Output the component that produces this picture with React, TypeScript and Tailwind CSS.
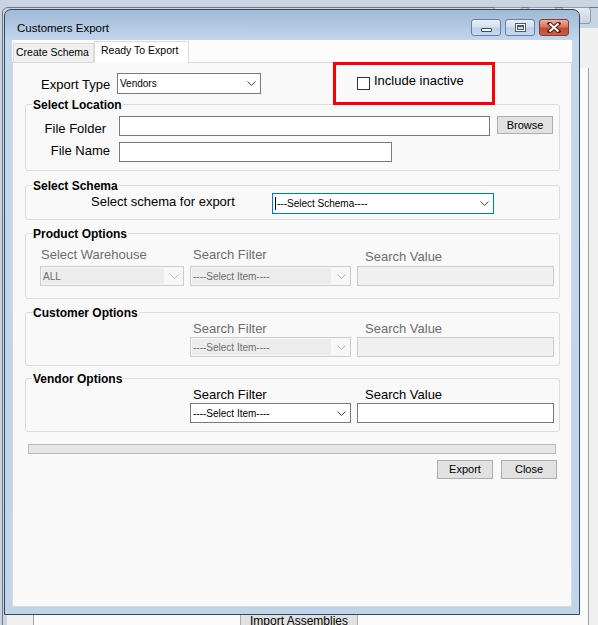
import React from "react";

const Chevron = ({ color }: { color: string }) => (
  <svg width="9" height="5" viewBox="0 0 9 5" className="block">
    <path d="M0.5 0.5 L4.5 4.5 L8.5 0.5" fill="none" stroke={color} strokeWidth="1" />
  </svg>
);

type SelProps = { text: string; cls: string; disabled?: boolean; focused?: boolean; caret?: boolean };

function Select({ text, cls, disabled, focused, caret }: SelProps) {
  const border = focused ? "border-[#0078d7]" : disabled ? "border-[#cccccc]" : "border-[#7a7a7a]";
  return (
    <div className={`${cls} flex items-stretch border ${border} ${disabled ? "bg-[#f7f7f7]" : "bg-white"}`}>
      <div
        className={`flex-1 flex items-center m-[1px] pl-[1px] text-[10px] whitespace-nowrap overflow-hidden ${
          disabled ? "bg-[#ececec] text-[#6d6d6d]" : "text-black"
        }`}
      >
        {caret && <span className="w-px h-[13px] bg-black mr-[1px]" />}
        {text}
      </div>
      <div className="w-[18px] flex items-center justify-center">
        <Chevron color={disabled ? "#b4b4b4" : "#404040"} />
      </div>
    </div>
  );
}

function Group({ title, cls, children }: { title: string; cls: string; children: React.ReactNode }) {
  return (
    <div className={`relative ml-[12px] w-[535px] border border-[#dcdcdc] rounded-[3px] ${cls}`}>
      <span className="absolute left-[6px] top-[-7px] px-[1px] bg-[#f9f9f9] text-[12px] leading-[14px] font-bold text-black whitespace-nowrap">
        {title}
      </span>
      {children}
    </div>
  );
}

function WinBtn({ children, close }: { children: React.ReactNode; close?: boolean }) {
  return (
    <div
      className={`w-[30px] h-[17px] rounded-[3px] border flex items-center justify-center ${
        close
          ? "border-[#8b3a2e] bg-[linear-gradient(to_bottom,#eab0a2_0%,#d97460_45%,#c34a35_55%,#c9614b_100%)]"
          : "border-[#6b7f9c] bg-[linear-gradient(to_bottom,#e8f0f9_0%,#d3e0f0_45%,#bcd0e8_55%,#c6d8ee_100%)]"
      }`}
    >
      {children}
    </div>
  );
}

export default function App() {
  return (
    <div className="relative w-[598px] h-[625px] overflow-hidden bg-[#c9d4e0] font-['Liberation_Sans',Arial,sans-serif] text-black">
      {/* background window */}
      <div className="absolute left-[2px] top-[7px] w-[700px] h-[700px] rounded-tl-[6px] border border-[#6e7a88] bg-[#c8d5e3]">
        <div className="absolute left-[490px] top-[-1px] w-[30px] h-[17px] rounded-[3px] border border-[#8d9bad] bg-[linear-gradient(to_bottom,#e4eaf1,#c9d3de)]" />
        <div className="absolute left-[524px] top-[-1px] w-[30px] h-[17px] rounded-[3px] border border-[#8d9bad] bg-[linear-gradient(to_bottom,#e4eaf1,#c9d3de)]" />
        <div className="absolute left-[558px] top-[-1px] w-[30px] h-[17px] rounded-[3px] border border-[#8d9bad] bg-[linear-gradient(to_bottom,#e4eaf1,#c9d3de)]" />
        <div className="absolute left-[4px] top-[20px] right-0 bottom-0 bg-[#f0f0f0]">
          <div className="absolute left-[26px] top-[40px] w-[556px] bottom-0 border-l border-r border-[#a0a0a0] bg-[#fafafa]" />
        </div>
      </div>
      <div className="absolute left-[240px] top-[613px] w-[118px] h-[24px] border border-[#adadad] bg-[#e1e1e1] text-center text-[12px] leading-[14px]">
        Import Assemblies
      </div>

      {/* dialog */}
      <div className="absolute left-[4px] top-[9px] w-[576px] h-[606px] rounded-t-[7px] border border-[#37465a] bg-[linear-gradient(to_bottom,#a0b9d6_0px,#c3d7ed_31px,#bfd4eb_100%)] flex flex-col">
        <div className="h-[30px] flex justify-between">
          <div className="pl-[12px] pt-[11px] text-[11.5px] leading-[14px]">Customers Export</div>
          <div className="flex gap-[4px] pt-[9px] pr-[10px]">
            <WinBtn>
              <div className="mt-[4px] w-[11px] h-[4px] border border-[#3d4b5e] bg-white rounded-[1px]" />
            </WinBtn>
            <WinBtn>
              <div className="w-[11px] h-[9px] border border-[#4b5a6e] bg-white p-[1px]">
                <div className="w-full h-full border border-[#4b5a6e] border-t-2 bg-[#c9d6e6]" />
              </div>
            </WinBtn>
            <WinBtn close>
              <svg width="14" height="11" viewBox="0 0 14 11">
                <path d="M2.5 1.5 L11.5 9.5 M11.5 1.5 L2.5 9.5" stroke="#5a2016" strokeWidth="4" strokeLinecap="square" />
                <path d="M2.5 1.5 L11.5 9.5 M11.5 1.5 L2.5 9.5" stroke="#ffffff" strokeWidth="2" />
              </svg>
            </WinBtn>
          </div>
        </div>

        {/* client */}
        <div className="flex-1 mx-[7px] mb-[7px] bg-[#fcfcfc] flex flex-col">
          <div className="h-[22px] flex items-end">
            <div className="ml-[1px] w-[81px] h-[19px] border border-b-0 border-[#d9d9d9] bg-[#f0f0f0] text-[10.5px] leading-[16px] pl-[2px] whitespace-nowrap">
              Create Schema
            </div>
            <div className="relative z-10 mb-[-1px] w-[95px] h-[22px] border border-b-0 border-[#d9d9d9] bg-white text-[10.5px] leading-[16px] pl-[6px] whitespace-nowrap">
              Ready To Export
            </div>
          </div>

          <div className="relative flex-1 border border-[#d9d9d9] bg-[#f9f9f9] flex flex-col pt-[10px] text-[13px]">
            <div className="absolute left-[320px] top-[-1px] w-[162px] h-[43px] border-[3px] border-[#ff0000] z-20" />

            {/* export type row */}
            <div className="flex items-start h-[21px]">
              <span className="ml-[28px] w-[70px] mt-[2px] leading-[20px] whitespace-nowrap">Export Type</span>
              <Select cls="ml-[6px] w-[144px] h-[21px]" text="Vendors" />
              <div className="ml-[96px] mt-[4px] w-[13px] h-[13px] border border-[#333333] bg-white" />
              <span className="ml-[4px] mt-[-2px] leading-[20px] whitespace-nowrap">Include inactive</span>
            </div>

            <Group title="Select Location" cls="mt-[10px] h-[67px] pt-[11px]">
              <div className="flex items-start h-[20px]">
                <span className="w-[80px] text-right mt-[3px] leading-[20px] whitespace-nowrap">File Folder</span>
                <div className="ml-[13px] w-[371px] h-[20px] border border-[#7a7a7a] bg-white" />
                <button className="ml-[7px] w-[56px] h-[18px] border border-[#adadad] bg-[#e1e1e1] text-[11px] leading-[16px] text-black">
                  Browse
                </button>
              </div>
              <div className="flex items-start h-[20px] mt-[6px]">
                <span className="w-[84px] text-right mt-[-1px] leading-[20px] whitespace-nowrap">File Name</span>
                <div className="ml-[9px] w-[273px] h-[20px] border border-[#7a7a7a] bg-white" />
              </div>
            </Group>

            <Group title="Select Schema" cls="mt-[14px] h-[35px] pt-[7px] pl-[65px]">
              <div className="flex items-start h-[21px]">
                <span className="w-[142px] mt-[-1px] leading-[20px] whitespace-nowrap">Select schema for export</span>
                <Select cls="ml-[39px] w-[222px] h-[21px]" text="---Select Schema----" focused caret />
              </div>
            </Group>

            <Group title="Product Options" cls="mt-[13px] h-[66px] pt-[13px] pl-[14px]">
              <div className="flex">
                <div className="w-[144px] flex flex-col">
                  <span className="ml-[1px] leading-[16px] text-[#6d6d6d] whitespace-nowrap">Select Warehouse</span>
                  <Select cls="mt-[3px] w-[144px] h-[20px]" text="ALL" disabled />
                </div>
                <div className="ml-[6px] w-[161px] flex flex-col">
                  <span className="ml-[3px] leading-[16px] text-[#6d6d6d] whitespace-nowrap">Search Filter</span>
                  <Select cls="mt-[3px] w-[161px] h-[20px]" text="----Select Item----" disabled />
                </div>
                <div className="ml-[6px] w-[197px] flex flex-col">
                  <span className="ml-[8px] mt-[2px] leading-[16px] text-[#6d6d6d] whitespace-nowrap">Search Value</span>
                  <div className="mt-[1px] w-[197px] h-[20px] border border-[#cccccc] bg-[#f0f0f0]" />
                </div>
              </div>
            </Group>

            <Group title="Customer Options" cls="mt-[13px] h-[54px] pt-[8px] pl-[164px]">
              <div className="flex">
                <div className="w-[161px] flex flex-col">
                  <span className="ml-[3px] leading-[16px] text-[#6d6d6d] whitespace-nowrap">Search Filter</span>
                  <Select cls="w-[161px] h-[20px]" text="----Select Item----" disabled />
                </div>
                <div className="ml-[6px] w-[197px] flex flex-col">
                  <span className="ml-[8px] leading-[16px] text-[#6d6d6d] whitespace-nowrap">Search Value</span>
                  <div className="w-[197px] h-[20px] border border-[#cccccc] bg-[#f0f0f0]" />
                </div>
              </div>
            </Group>

            <Group title="Vendor Options" cls="mt-[12px] h-[54px] pt-[8px] pl-[164px]">
              <div className="flex">
                <div className="w-[161px] flex flex-col">
                  <span className="ml-[3px] leading-[16px] whitespace-nowrap">Search Filter</span>
                  <Select cls="w-[161px] h-[20px]" text="----Select Item----" />
                </div>
                <div className="ml-[6px] w-[197px] flex flex-col">
                  <span className="ml-[8px] leading-[16px] whitespace-nowrap">Search Value</span>
                  <div className="w-[197px] h-[20px] border border-[#7a7a7a] bg-white" />
                </div>
              </div>
            </Group>

            <div className="mt-[12px] ml-[15px] w-[528px] h-[10px] border border-[#bcbcbc] bg-[#e6e6e6]" />

            <div className="mt-[6px] flex justify-end gap-[8px] pr-[14px]">
              <button className="w-[56px] h-[19px] border border-[#adadad] bg-[#e1e1e1] text-[11px] leading-[17px] text-black">
                Export
              </button>
              <button className="w-[56px] h-[19px] border border-[#adadad] bg-[#e1e1e1] text-[11px] leading-[17px] text-black">
                Close
              </button>
            </div>
          </div>
        </div>
      </div>
    </div>
  );
}
